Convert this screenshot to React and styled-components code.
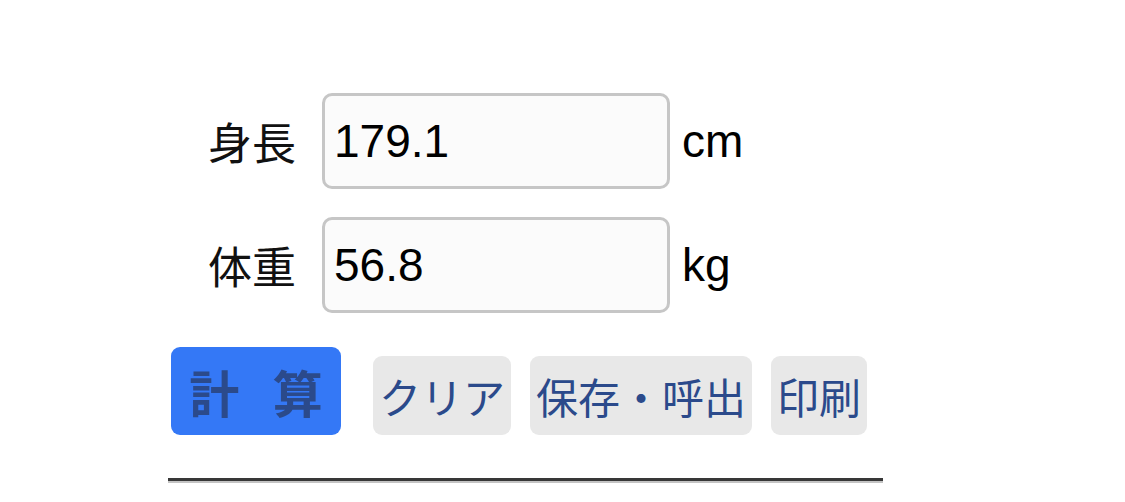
import React from "react";
import styled, { createGlobalStyle } from "styled-components";

const GlobalStyle = createGlobalStyle`
  html, body {
    margin: 0;
    padding: 0;
    background: #ffffff;
  }
  body {
    font-family: "Liberation Sans", "Noto Sans CJK JP", sans-serif;
  }
`;

const Page = styled.div`
  padding: 93px 0 0 168px;
  width: 715px;
`;

const Form = styled.div`
  display: flex;
  flex-direction: column;
  gap: 28px;
`;

const Row = styled.div`
  display: flex;
  align-items: center;
`;

const Label = styled.span`
  width: 154px;
  padding-right: 26px;
  box-sizing: border-box;
  text-align: right;
  font-family: "Noto Sans CJK JP", sans-serif;
  font-size: 44px;
  color: #111;
  line-height: 1;
`;

const Field = styled.input`
  width: 348px;
  height: 96px;
  box-sizing: border-box;
  border: 3px solid #c6c6c6;
  border-radius: 10px;
  background: #fbfbfb;
  padding: 0 0 0 9px;
  font-family: "Liberation Sans", sans-serif;
  font-size: 46px;
  color: #000;
  outline: none;
`;

const Unit = styled.span`
  margin-left: 12px;
  font-family: "Liberation Sans", sans-serif;
  font-size: 46px;
  color: #000;
`;

const Buttons = styled.div`
  display: flex;
  align-items: flex-end;
  margin-top: 34px;
  margin-left: 3px;
`;

const Button = styled.button`
  flex-shrink: 0;
  white-space: nowrap;
  border: none;
  margin: 0 19px 0 0;
  font-family: "Noto Sans CJK JP", sans-serif;
  color: #2b4a8b;
  cursor: pointer;
  line-height: 1;
  ${(p) =>
    p.$primary
      ? `
    background: #3478f6;
    width: 170px;
    height: 88px;
    padding: 0;
    border-radius: 9px;
    font-size: 50px;
    font-weight: 700;
    word-spacing: 22px;
    margin-right: 32px;
  `
      : `
    background: #e8e8e8;
    height: 79px;
    padding: 0 6px;
    border-radius: 9px;
    font-size: 42px;
  `}
`;

const Rule = styled.hr`
  margin: 43px 0 0 0;
  width: 715px;
  height: 0;
  border: none;
  border-top: 3px solid #383838;
  border-bottom: 2px solid #c4c4c4;
`;

export default function App() {
  return (
    <>
      <GlobalStyle />
      <Page>
        <Form>
          <Row>
            <Label>身長</Label>
            <Field defaultValue="179.1" />
            <Unit>cm</Unit>
          </Row>
          <Row>
            <Label>体重</Label>
            <Field defaultValue="56.8" />
            <Unit>kg</Unit>
          </Row>
        </Form>
        <Buttons>
          <Button $primary>計 算</Button>
          <Button>クリア</Button>
          <Button>保存・呼出</Button>
          <Button>印刷</Button>
        </Buttons>
        <Rule />
      </Page>
    </>
  );
}
